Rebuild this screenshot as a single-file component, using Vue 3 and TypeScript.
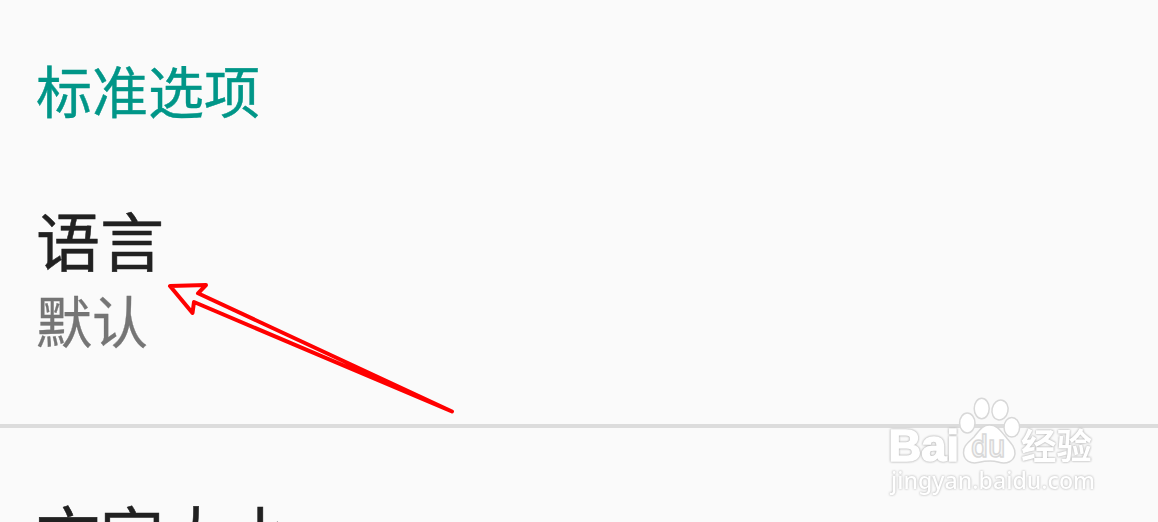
<script setup lang="ts">
interface Preference {
  title: string
  summary?: string
}

const category = '标准选项'
const preferences: Preference[] = [
  { title: '语言', summary: '默认' },
  { title: '文字大小' },
]
</script>

<template>
  <main class="screen">
    <h2 class="category">{{ category }}</h2>
    <section v-for="item in preferences" :key="item.title" class="preference">
      <div class="title">{{ item.title }}</div>
      <div v-if="item.summary" class="summary">{{ item.summary }}</div>
    </section>

    <svg class="arrow" width="300" height="144" viewBox="160 276 300 144" aria-hidden="true">
      <path d="M452 411.5 L194 302 L192.5 313 L170 286 L206 285 L198 293.3 Z" />
    </svg>

    <svg class="watermark" width="228" height="112" viewBox="880 392 228 112">
      <g class="mark">
        <text class="brand" x="888.5" y="461" textLength="70.5" lengthAdjust="spacingAndGlyphs">Bai</text>
        <ellipse cx="967.3" cy="423" rx="7.7" ry="10" />
        <ellipse cx="981.7" cy="408.5" rx="7.5" ry="10.3" />
        <ellipse cx="1000" cy="410" rx="8" ry="10" transform="rotate(12 1000 410)" />
        <ellipse cx="1011.8" cy="427.3" rx="7.8" ry="9.8" />
        <path d="M989.5 425 C982 425 979 431 974 437 C968 443 963 446 963.5 453 C964 461 971 464 978 462.5 C985 461 991 460 998 462 C1007 465 1014 461 1015 454 C1015.5 447 1010 442 1005 436 C1000 430 997 425 989.5 425 Z" />
        <text class="du" x="971" y="456.5" textLength="34.5" lengthAdjust="spacingAndGlyphs">du</text>
        <text class="experience" x="1021" y="458.5" textLength="71" lengthAdjust="spacingAndGlyphs">经验</text>
      </g>
      <text class="address" x="891" y="489" textLength="204" lengthAdjust="spacingAndGlyphs">jingyan.baidu.com</text>
    </svg>
  </main>
</template>

<style>
body {
  margin: 0;
  background: #fafafa;
}
</style>

<style scoped>
.screen {
  position: relative;
  box-sizing: border-box;
  height: 522px;
  padding-top: 61px;
  overflow: hidden;
  background: #fafafa;
  font-family: "Noto Sans CJK SC", sans-serif;
}

.category {
  margin: 0 0 63px;
  padding-left: 36px;
  color: #009688;
  font-size: 56px;
  font-weight: 400;
  line-height: 56px;
  -webkit-text-stroke: 0.4px;
}

.preference {
  box-sizing: border-box;
  height: 248px;
  padding: 26px 36px 0;
  border-bottom: 4px solid #dcdcdc;
}

.preference + .preference {
  padding-top: 72px;
}

.title {
  color: #212121;
  font-size: 64px;
  line-height: 64px;
  -webkit-text-stroke: 0.5px;
}

.summary {
  margin-top: 21px;
  color: #757575;
  font-size: 56px;
  line-height: 56px;
  -webkit-text-stroke: 0.3px;
}

.arrow {
  position: absolute;
  left: 160px;
  top: 276px;
}

.arrow path {
  fill: none;
  stroke: #ff0000;
  stroke-width: 4;
  stroke-linejoin: round;
}

.watermark {
  position: absolute;
  left: 880px;
  top: 392px;
}

.mark {
  fill: #ffffff;
  stroke: #d8d8d8;
  stroke-width: 1.5;
}

.mark .brand {
  font: 700 44px "Liberation Sans", sans-serif;
  stroke: #ffffff;
  stroke-width: 1.6;
  filter: drop-shadow(0 0 0.8px #b0b0b0) drop-shadow(0 0 0.4px #d8d8d8);
}

.mark .du {
  font: 600 30px "Open Sans", sans-serif;
  fill: #f6f6f6;
  stroke-width: 1.6;
}

.mark .experience {
  font: 700 35px "Noto Sans CJK SC", sans-serif;
  stroke: none;
  filter: drop-shadow(0 0 0.8px #b0b0b0) drop-shadow(0 0 0.4px #d8d8d8);
}

.address {
  fill: #ffffff;
  font: 500 23.5px "Noto Sans", sans-serif;
  filter: drop-shadow(0 0 0.8px #bcbcbc) drop-shadow(0 0 0.4px #e0e0e0);
}
</style>
